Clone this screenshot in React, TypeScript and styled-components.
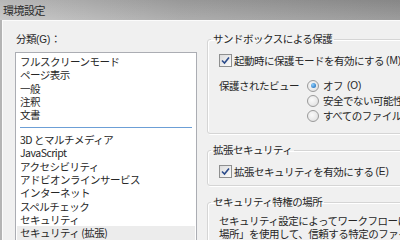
import styled, { createGlobalStyle } from "styled-components";

const GlobalStyle = createGlobalStyle`
  html, body {
    margin: 0;
    padding: 0;
    background: #f0f0f0;
  }
  body {
    font-family: "Noto Sans CJK JP", "Liberation Sans", sans-serif;
    font-size: 10.5px;
    letter-spacing: -0.5px;
    color: #262626;
  }
`;

const Window = styled.div`
  width: 400px;
  height: 240px;
  overflow: hidden;
  display: flex;
  flex-direction: column;
`;

const TitleBar = styled.div`
  height: 20px;
  flex-shrink: 0;
  display: flex;
  align-items: center;
  padding-left: 3px;
  color: #2b2b2b;
  font-size: 11px;
  background: linear-gradient(to bottom, rgba(0, 0, 0, 0.06), rgba(255, 255, 255, 0.12)),
    linear-gradient(to right, #c3c3c3, #a2a2a2 45%, #8f8f8f);
`;

const Frame = styled.div`
  flex: 1;
  display: flex;
  padding-left: 2px;
  background: #b4b4b4;
  min-height: 0;
`;

const Body = styled.div`
  flex: 1;
  display: flex;
  gap: 10px;
  background: #f0f0f0;
  border-top: 1px solid #fbfbfb;
  border-left: 1px solid #fbfbfb;
  padding: 11px 0 0 12px;
  min-width: 0;
`;

const LeftColumn = styled.div`
  width: 182px;
  flex-shrink: 0;
  display: flex;
  flex-direction: column;
`;

const FieldLabel = styled.div`
  line-height: 14px;
  margin-bottom: 5px;
  padding-left: 1px;
`;

const ListBox = styled.div`
  flex: 1;
  background: #fff;
  border: 1px solid #abadb3;
  border-bottom: none;
  padding: 2px 1px 0 1px;
`;

const ListItem = styled.div<{ $selected?: boolean }>`
  line-height: 13.33px;
  height: 13.33px;
  padding-left: 3px;
  white-space: nowrap;
  background: ${(p) => (p.$selected ? "#ececec" : "transparent")};
`;

const ListSeparator = styled.div`
  height: 1px;
  margin: 5px 3px 5.3px 3px;
  background: #6c9fd6;
`;

const RightColumn = styled.div`
  width: 270px;
  flex-shrink: 0;
  display: flex;
  flex-direction: column;
  gap: 9px;
`;

const GroupBox = styled.fieldset`
  margin: 0;
  padding: 7px 8px 7px 11px;
  border: 1px solid #d5d5d5;
  border-radius: 3px;
  box-shadow: inset 1px 1px 0 #fff, 1px 1px 0 #fff;
  min-width: 0;
`;

const Legend = styled.legend`
  padding: 0 2px;
  margin-left: -8px;
  line-height: 14px;
`;

const CheckRow = styled.label`
  display: flex;
  align-items: center;
  gap: 2px;
  height: 14px;
  white-space: nowrap;
`;

const CheckBoxBox = styled.span`
  width: 11px;
  height: 11px;
  border: 1px solid #8e8f8f;
  background: linear-gradient(135deg, #dcdcdc, #fbfbfb);
  display: inline-flex;
  align-items: center;
  justify-content: center;
  flex-shrink: 0;
`;

const Hotkey = styled.span`
  font-family: "Liberation Sans", sans-serif;
  font-size: 10px;
  letter-spacing: 0;
`;

const ViewGrid = styled.div`
  display: grid;
  grid-template-columns: 88px 1fr;
  margin: 11px 0 3px;
`;

const ViewLabel = styled.div`
  line-height: 15px;
`;

const RadioList = styled.div`
  display: flex;
  flex-direction: column;
`;

const RadioRow = styled.div`
  display: flex;
  align-items: center;
  gap: 4px;
  height: 15px;
  white-space: nowrap;
`;

const RadioDot = styled.span<{ $checked?: boolean }>`
  width: 10px;
  height: 10px;
  border-radius: 50%;
  border: 1px solid #9a9a9a;
  background: radial-gradient(circle at 40% 40%, #fafafa, #dcdcdc);
  display: inline-flex;
  align-items: center;
  justify-content: center;
  flex-shrink: 0;
  &::after {
    content: "";
    display: ${(p) => (p.$checked ? "block" : "none")};
    width: 5px;
    height: 5px;
    border-radius: 50%;
    background: radial-gradient(circle at 35% 35%, #8fd0ff, #1060b0);
  }
`;

const Paragraph = styled.div`
  margin-top: -1px;
  line-height: 12.7px;
  white-space: nowrap;
`;

const CheckMark = () => (
  <svg width="9" height="9" viewBox="0 0 9 9">
    <path d="M1 4.5 L3.5 7 L8 1.5" fill="none" stroke="#2a4a8a" strokeWidth="1.6" />
  </svg>
);

const categoriesTop = ["フルスクリーンモード", "ページ表示", "一般", "注釈", "文書"];
const categoriesBottom = [
  "3D とマルチメディア",
  "JavaScript",
  "アクセシビリティ",
  "アドビオンラインサービス",
  "インターネット",
  "スペルチェック",
  "セキュリティ",
  "セキュリティ (拡張)",
];

const App = () => {
  return (
    <Window>
      <GlobalStyle />
      <TitleBar>環境設定</TitleBar>
      <Frame>
        <Body>
          <LeftColumn>
            <FieldLabel>
              分類<Hotkey>(G)</Hotkey>：
            </FieldLabel>
            <ListBox>
              {categoriesTop.map((c) => (
                <ListItem key={c}>{c}</ListItem>
              ))}
              <ListSeparator />
              {categoriesBottom.map((c) => (
                <ListItem key={c} $selected={c === "セキュリティ (拡張)"}>
                  {c}
                </ListItem>
              ))}
            </ListBox>
          </LeftColumn>

          <RightColumn>
            <GroupBox>
              <Legend>サンドボックスによる保護</Legend>
              <CheckRow>
                <CheckBoxBox>
                  <CheckMark />
                </CheckBoxBox>
                起動時に保護モードを有効にする<Hotkey>(M)</Hotkey>
              </CheckRow>
              <ViewGrid>
                <ViewLabel>保護されたビュー</ViewLabel>
                <RadioList>
                  <RadioRow>
                    <RadioDot $checked />
                    オフ<Hotkey>(O)</Hotkey>
                  </RadioRow>
                  <RadioRow>
                    <RadioDot />
                    安全でない可能性のある場所のファイル
                  </RadioRow>
                  <RadioRow>
                    <RadioDot />
                    すべてのファイル
                  </RadioRow>
                </RadioList>
              </ViewGrid>
            </GroupBox>

            <GroupBox>
              <Legend>拡張セキュリティ</Legend>
              <CheckRow>
                <CheckBoxBox>
                  <CheckMark />
                </CheckBoxBox>
                拡張セキュリティを有効にする<Hotkey>(E)</Hotkey>
              </CheckRow>
            </GroupBox>

            <GroupBox>
              <Legend>セキュリティ特権の場所</Legend>
              <Paragraph>
                セキュリティ設定によってワークフローに支障が生じる場合は、「特権の
                <br />
                場所」を使用して、信頼する特定のファイル、フォルダー、ホストに対してセキュ
                <br />
                リティ設定の制限を無視することができます。
              </Paragraph>
            </GroupBox>
          </RightColumn>
        </Body>
      </Frame>
    </Window>
  );
};

export default App;
